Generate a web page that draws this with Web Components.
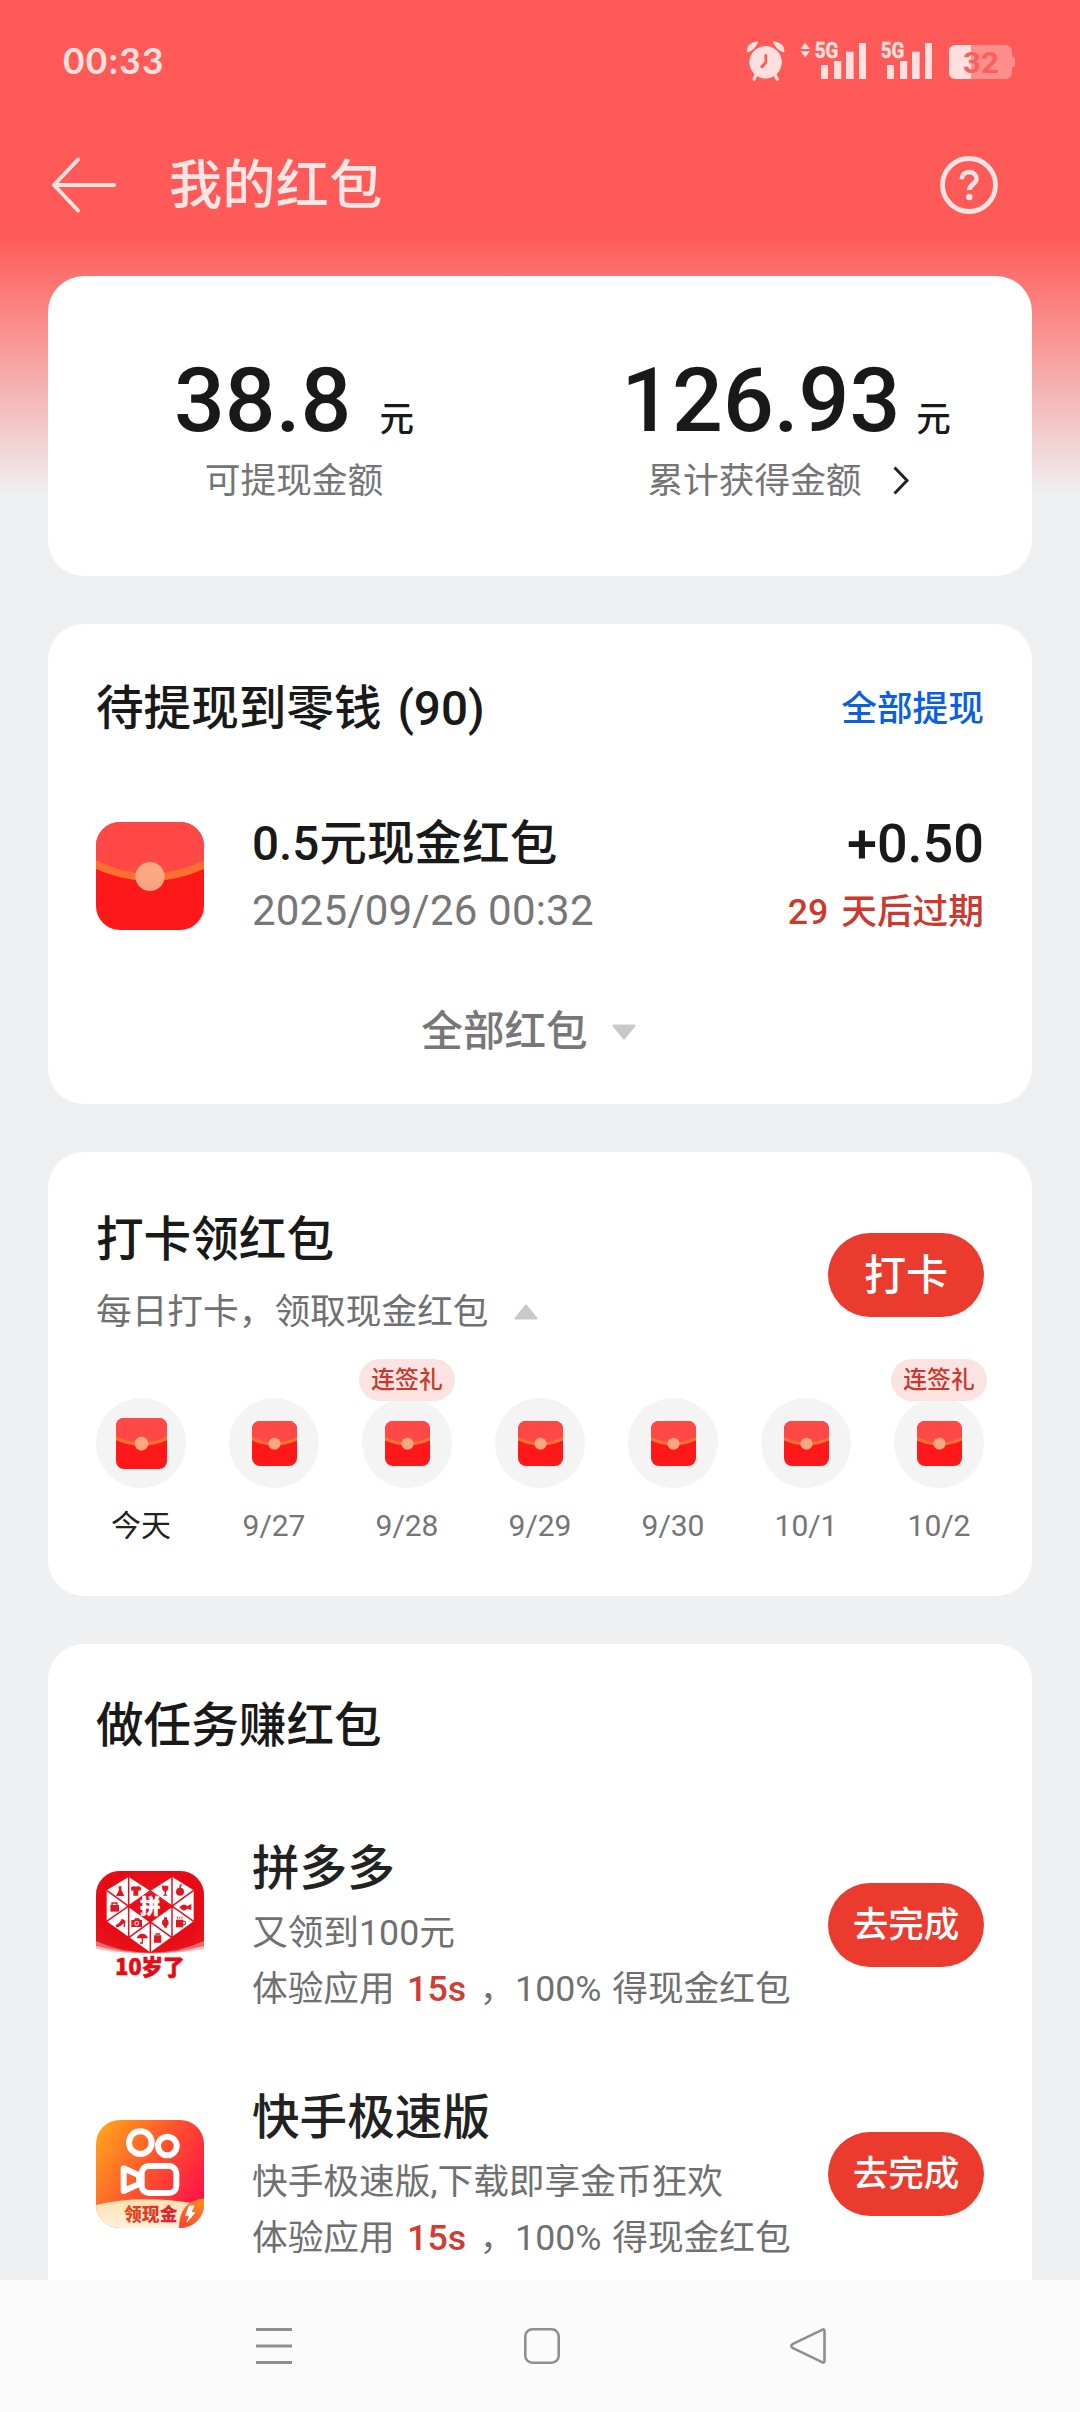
<!DOCTYPE html>
<html lang="zh-CN">
<head>
<meta charset="utf-8">
<title>我的红包</title>
<style>
html,body{margin:0;padding:0}
body{width:1080px;height:2412px;overflow:hidden;background:#eff0f2;color:#191919;
font-family:Roboto,"Noto Sans CJK SC",sans-serif;font-size:35.700px}
</style>
</head>
<body>
<packet-page></packet-page>
<script>
const define=(name,html)=>customElements.define(name,class extends HTMLElement{
  constructor(){super();const t=document.createElement('template');
    t.innerHTML=html;
    this.attachShadow({mode:'open'}).append(t.content.cloneNode(true));}
});

define('status-bar',`
<style>
:host{display:flex;flex:none;align-items:center;justify-content:space-between;height:122px;padding:0 63px 0 63px;box-sizing:border-box;color:#ffe0df}
b{font:700 37px/44px Lato,sans-serif;letter-spacing:1.300px;margin-top:-2px}
svg{display:block;overflow:visible}
text{font-family:Roboto,sans-serif;font-weight:700}
</style>
<b>00:33</b>
<svg width="272" height="44" viewBox="745 40 272 44" fill="#ffe0df">
  <circle cx="765.6" cy="63.3" r="16.2"/>
  <path d="M747.6 52.5Q747 45 757.5 43Q754 51 747.6 52.5ZM783.6 52.5Q784.2 45 773.7 43Q777.2 51 783.6 52.5Z" stroke="#ffe0df" stroke-width="1.4" stroke-linejoin="round"/>
  <path d="M756.5 75l-2.4 5M774.7 75l2.4 5" stroke="#ffe0df" stroke-width="3.2" stroke-linecap="round"/>
  <path d="M765.8 56.5v7l-4 4.2" fill="none" stroke="#ff5a57" stroke-width="2.8" stroke-linecap="round" stroke-linejoin="round"/>
  <path d="M800.5 50l4.700-6.200l4.700 6.200zM800.5 52.3h9.4l-4.7 6z"/>
  <g font-size="22.500" stroke="#ffe0df" stroke-width=".5"><text x="814.800" y="59" textLength="23.500" lengthAdjust="spacingAndGlyphs">5G</text>
  <text x="880.800" y="59" textLength="23.500" lengthAdjust="spacingAndGlyphs">5G</text></g>
  <path d="M821 66h7v14h-7zM834 62h7.2v18H834zM846 52.8h7.6V80H846zM859 44h7v36h-7z"/>
  <path d="M887 66h7v14h-7zM900 62h7.2v18H900zM912 52.8h7.6V80H912zM925 44h7v36h-7z"/>
  <path d="M956 46h49q7 0 7 7v4.5q3 0 3 3v5q0 3-3 3V73q0 7-7 7h-49q-7 0-7-7V53q0-7 7-7z" fill="#ff8f8d"/>
  <path d="M971 46h-15q-7 0-7 7v20q0 7 7 7h15z"/>
  <text x="963" y="73.8" font-size="29.500" fill="#ff5f5c" textLength="36" lengthAdjust="spacingAndGlyphs">32</text>
</svg>`);

define('app-bar',`
<style>
:host{display:flex;flex:none;align-items:center;height:126px;padding:0 81px 0 50px;box-sizing:border-box;color:#ffe5e4}
svg{display:block;flex:none}
h1{flex:1;margin:2px 0 0 51px;font-size:53px;font-weight:500;line-height:72px;letter-spacing:.4px}
</style>
<svg width="68" height="58" viewBox="0 0 68 58" fill="none" stroke="#ffe3e2" stroke-width="4" stroke-linecap="round" stroke-linejoin="round"><path d="M28 3.500L4 29l24 25.500M4 29h60"/></svg>
<h1>我的红包</h1>
<svg width="60" height="60" viewBox="0 0 60 60" fill="none" stroke="#ffe3e2"><circle cx="30" cy="30" r="26.500" stroke-width="4.800"/><path d="M22.700 24.300c0-4.400 3.200-7.200 7.500-7.200 4.200 0 7.300 2.800 7.300 6.600 0 5.300-7.200 5.600-7.200 11.300" stroke-width="4.600" stroke-linecap="butt"/><circle cx="30.300" cy="42" r="3.200" fill="#ffe3e2" stroke="none"/></svg>`);

define('panel-card',`
<style>:host{display:block;box-sizing:border-box;margin:0 48px 48px;padding:0 48px;background:#fff;border-radius:36px;overflow:hidden;flex:none}</style><slot></slot>`);

define('amount-stat',`
<style>
:host{display:flex;flex-direction:column;align-items:center;flex:1 1 0}
.v{display:flex;align-items:baseline;height:100px;line-height:100px;font-weight:500;font-size:34.500px}
.v b{font-size:89.500px;font-weight:500}
.l{display:flex;align-items:center;height:48px;line-height:48px;margin-top:6px;color:#757575}
.v i{font-style:normal;margin-left:var(--unit-gap,16px)}
</style>
<div class="v"><b><slot name="value"></slot></b><i>元</i></div>
<div class="l"><slot></slot></div>`);

define('chevron-mark',`
<style>:host{display:block;width:63px;height:36px}svg{display:block}</style>
<svg width="63" height="36" viewBox="0 0 63 36" fill="none" stroke="#222" stroke-width="3"><path d="M32.500 4.500l12.500 13l-12.500 13"/></svg>`);

define('caret-mark',`
<style>:host{display:block;width:26px;height:18px}:host([up]){transform:rotate(180deg)}svg{display:block}</style>
<svg width="26" height="18" viewBox="0 0 26 18"><path d="M2.500 2.500h21L13 15.500z" fill="#c9c9c9" stroke="#c9c9c9" stroke-width="2" stroke-linejoin="round"/></svg>`);

define('envelope-icon',`
<style>:host{display:block;width:var(--size,108px);height:var(--size,108px);border-radius:var(--rad,24px);overflow:hidden;flex:none}svg{display:block;width:100%;height:100%}</style>
<svg viewBox="0 0 108 108">
<defs><linearGradient id="g" x1="0" y1="0" x2="0" y2="1"><stop offset="0" stop-color="#fdad7d"/><stop offset="1" stop-color="#f9a184"/></linearGradient></defs>
<rect width="108" height="108" fill="#ff181a"/>
<path d="M0 0h108v43Q54 68 0 43z" fill="#ff4946"/>
<path d="M0 38.500Q54 65 108 38.500v8.500Q54 71 0 47z" fill="#ff7030"/>
<circle cx="54" cy="54.500" r="14.600" fill="url(#g)"/></svg>`);

define('pill-button',`
<style>:host{display:block;flex:none}
button{all:unset;box-sizing:border-box;display:block;width:156px;height:84px;border-radius:42px;background:#eb3b2f;color:#fff;text-align:center;line-height:83px;font-size:var(--fs,35.600px);font-weight:500}</style>
<button><slot></slot></button>`);

define('packet-item',`
<style>
:host{display:flex;align-items:center;height:120px;margin-top:70px}
.m{flex:1;margin-left:48px}.r{text-align:right}
.a{height:56px;line-height:56px;font-size:47.600px;font-weight:500}
.b{height:50px;line-height:50px;margin-top:14px;font-size:42px;letter-spacing:.200px;color:#777}
.r .a{font-size:54px}
.r .b{font-size:35.700px;line-height:52px;font-weight:500;letter-spacing:0;word-spacing:4px;color:#cd392d}
</style>
<envelope-icon></envelope-icon>
<div class="m"><div class="a"><slot name="title"></slot></div><div class="b"><slot name="time"></slot></div></div>
<div class="r"><div class="a"><slot name="amount"></slot></div><div class="b"><slot name="expiry"></slot></div></div>`);

define('day-cell',`
<style>
:host{display:flex;flex-direction:column;align-items:center;width:90px;position:relative;--size:45px;--rad:8px;color:#757575}
:host([today]){--size:51px;color:#222}
.c{display:flex;align-items:center;justify-content:center;width:90px;height:90px;border-radius:50%;background:#f4f4f4}
.t{margin-top:17px;line-height:41px;font-size:30px;white-space:nowrap}
.g{display:none;position:absolute;top:-39px;left:-3px;width:96px;height:42px;border-radius:21px;background:#fae3e1;color:#c9382d;font-size:23.800px;line-height:42px;font-weight:500;text-align:center}
:host([gift]) .g{display:block}
</style>
<div class="c"><envelope-icon></envelope-icon></div><div class="t"><slot></slot></div><div class="g"><slot name="gift"></slot></div>`);

define('pdd-icon',`
<style>:host{display:block;width:108px;height:108px;border-radius:24px;flex:none}svg{display:block;overflow:visible}text{font-family:"Noto Sans CJK SC",sans-serif;font-weight:900}</style>
<svg width="108" height="108" viewBox="48 62 324 324">
<defs><clipPath id="o"><rect x="48" y="62" width="324" height="324" rx="72"/></clipPath><radialGradient id="r" cx=".5" cy=".4" r=".65"><stop offset="0" stop-color="#f01820"/><stop offset=".7" stop-color="#e60a15"/><stop offset="1" stop-color="#e8141c"/></radialGradient></defs>
<g clip-path="url(#o)">
<path d="M48 62h324v324H48z" fill="#fff"/>
<path d="M48 62h324v234Q211 324 48 296z" fill="#f8bcbc"/>
<path d="M48 62h324v225Q211 330 48 287z" fill="#f06a6c"/>
<path d="M48 62h324v210Q300 306 211 307Q120 306 48 272z" fill="url(#r)"/></g>
<path d="M146 80L211 122L277 80L341 120V213L211 306L80 213V120z" fill="#fff"/>
<path d="M146 80V260M276 80V260M211 214V306M80 120L276 262M341 120L146 262M80 213L211 122L341 213" fill="none" stroke="#e80e19" stroke-width="4.500"/>
<g fill="#dc1820">
<path d="M115 108h10l-1 10 9 19h-25l9-19zM153 111l9-4q6 5 12 0l10 5-3 10-6-2v16h-15v-16l-6 2zM246 106h19q1 13-7 18v7l5 5h-15l6-5v-7q-9-5-8-18z"/>
<circle cx="300" cy="124" r="12"/><path d="M298 113l1-10 7-2-4 12z"/>
<path d="M91 164h26v20H91z"/><path d="M96 165v-7h15v7" fill="none" stroke="#dc1820" stroke-width="4"/>
<path d="M298 171q12-15 24-4l12-6v18l-12-4q-11 12-24-4z"/>
<path d="M107 224q14-6 17-18 14 2 12 10l-1 15h-4v-13q-9 12-22 13zM154 209h8l3-5h12l3 5h6v21h-32z"/>
<circle cx="170" cy="219" r="7" fill="#fff"/><circle cx="170" cy="219" r="4"/>
<circle cx="256" cy="217" r="10"/><path d="M252 201h9v31h-9z"/>
<path d="M288 208h22v23h-22z"/><path d="M309 213h7v10h-7M292 205v-6M299 205v-6M306 205v-6" fill="none" stroke="#dc1820" stroke-width="3"/>
<path d="M170 264q4-14 17-14t17 14z"/><path d="M187 262v16h-7" fill="none" stroke="#dc1820" stroke-width="4"/>
<path d="M222 255h22v22h-22zM226 249h14v4h-14z"/></g>
<path d="M146 168L211 124L276 168L211 214z" fill="#e80e19"/>
<text x="211" y="191" text-anchor="middle" font-size="60" fill="#fff" stroke="#fff" stroke-width="2">拼</text>
<text x="106" y="374" font-size="66" fill="#e60a15" stroke="#e60a15" stroke-width="2" textLength="208" lengthAdjust="spacingAndGlyphs">10岁了</text>
</svg>`);

define('kuaishou-icon',`
<style>:host{display:block;width:108px;height:108px;border-radius:24px;overflow:hidden;flex:none}svg{display:block}text{font-family:"Noto Sans CJK SC",sans-serif;font-weight:900}</style>
<svg width="108" height="108" viewBox="48 60 324 324">
<defs><linearGradient id="k" x1="0" y1=".15" x2="1" y2=".75"><stop offset="0" stop-color="#ffa01e"/><stop offset=".5" stop-color="#ff522c"/><stop offset="1" stop-color="#ff1048"/></linearGradient>
<linearGradient id="t" x1="0" y1="0" x2="1" y2="0"><stop offset="0" stop-color="#e0501c"/><stop offset="1" stop-color="#e01a30"/></linearGradient>
<linearGradient id="c" x1="0" y1="0" x2="0" y2="1"><stop offset="0" stop-color="#ffe0b0"/><stop offset="1" stop-color="#fff1dc"/></linearGradient>
<linearGradient id="b" x1="1" y1="0" x2="0" y2="1"><stop offset="0" stop-color="#ff9b1c"/><stop offset="1" stop-color="#ff3c2e"/></linearGradient></defs>
<path d="M48 60h324v324H48z" fill="url(#k)"/>
<path d="M48 315Q170 284 330 308V384H48z" fill="url(#c)"/>
<path d="M384 295Q298 296 297 384H384z" fill="url(#b)"/>
<g fill="none" stroke="#fff" stroke-width="18" stroke-linejoin="round"><circle cx="181" cy="128" r="34"/><circle cx="262" cy="138" r="28"/><rect x="185" y="198" width="104" height="81" rx="22"/><path d="M131 205v68l46-21v-26z"/></g>
<path d="M328 318l-11 28 12 0-8 20 23-28-11-1 9-19z" fill="#fff" stroke="#fff" stroke-width="3" stroke-linejoin="round"/>
<text x="132" y="363" font-size="53" fill="url(#t)" textLength="160">领现金</text>
</svg>`);

define('task-row',`
<style>
:host{display:flex;align-items:center;height:180px;margin-bottom:69px}
.m{flex:1;margin-left:48px;padding-top:4px;white-space:nowrap}
.a{height:60px;line-height:60px;font-size:47.600px;font-weight:500;color:#222}
.b{height:50px;line-height:50px;margin-top:9px;color:#707070}
.c{height:50px;line-height:50px;margin-top:6px;padding-bottom:1px;color:#707070;word-spacing:2px}
em{font-style:normal;font-weight:500;color:#d23b30;margin:0 2.500px 0 1.500px}
</style>
<slot name="icon"></slot>
<div class="m"><div class="a"><slot name="title"></slot></div><div class="b"><slot name="note"></slot></div>
<div class="c">体验应用 <em>15s</em> ，100% 得现金红包</div></div>
<pill-button>去完成</pill-button>`);

define('nav-bar',`
<style>:host{display:flex;align-items:center;height:132px;background:#fbfbfb;padding:0 251px 0 254px;justify-content:space-between;flex:none}svg{display:block}</style>
<svg width="40" height="40" viewBox="0 0 40 40" stroke="#8f8f8f" stroke-width="2.800"><path d="M2 3.500h36M2 20h36M2 36.500h36"/></svg>
<svg width="40" height="40" viewBox="0 0 40 40" fill="none" stroke="#8f8f8f" stroke-width="2.600"><rect x="3.300" y="3.300" width="33.400" height="33.400" rx="7"/></svg>
<svg width="40" height="40" viewBox="0 0 40 40" fill="none" stroke="#8f8f8f" stroke-width="2.600" stroke-linejoin="round"><path d="M33 3.800Q35.500 2.500 35.500 5.500V34.500Q35.500 37.500 33 36.200L3.500 21.800Q1 20 3.500 18.200z"/></svg>`);

define('packet-page',`
<style>
:host{display:flex;flex-direction:column;width:1080px;height:2412px}
main{height:2280px;overflow:hidden;display:flex;flex-direction:column;background:linear-gradient(#ff5a57 0,#ff5a57 236px,#eff0f2 496px) #eff0f2}
.sum{margin-top:28px;height:300px;padding:75px 0 0}
.two{display:flex}
.list{height:480px;padding-top:50px}
.sign{height:444px;padding-top:58px;overflow:visible}
.todo{height:800px;padding-top:52px}
.head{display:flex;align-items:center;justify-content:space-between;height:70px;padding-bottom:2px}
h2{margin:0;font-size:47.600px;line-height:60px;font-weight:500;word-spacing:4px}
a{color:#0b60df;font-weight:500;line-height:50px}
.all{display:flex;align-items:center;justify-content:center;height:60px;line-height:60px;margin-top:66px;font-size:41.600px;font-weight:500;color:#777;gap:23px;padding-right:22px}
.sh{display:flex;align-items:center;justify-content:space-between;height:130px}
.st{padding-bottom:4px}
.sub{display:flex;align-items:center;gap:24px;height:48px;line-height:48px;margin-top:18px;color:#707070}
.days{display:flex;justify-content:space-between;margin-top:58px}
.todo h2{margin-bottom:79px}
</style>
<main>
<status-bar></status-bar>
<app-bar></app-bar>
<panel-card class="sum"><div class="two">
<amount-stat style="--unit-gap:28px"><span slot="value">38.8</span>可提现金额</amount-stat>
<amount-stat><span slot="value">126.93</span>累计获得金额<chevron-mark></chevron-mark></amount-stat></div></panel-card>
<panel-card class="list">
<div class="head"><h2>待提现到零钱 (90)</h2><a>全部提现</a></div>
<packet-item><span slot="title">0.5元现金红包</span><span slot="time">2025/09/26 00:32</span><span slot="amount">+0.50</span><span slot="expiry">29 天后过期</span></packet-item>
<div class="all"><span>全部红包</span><caret-mark></caret-mark></div>
</panel-card>
<panel-card class="sign">
<div class="sh"><div class="st"><h2>打卡领红包</h2><div class="sub"><span>每日打卡，领取现金红包</span><caret-mark up></caret-mark></div></div><pill-button style="--fs:42px">打卡</pill-button></div>
<div class="days"><day-cell today>今天</day-cell><day-cell>9/27</day-cell><day-cell gift>9/28<span slot="gift">连签礼</span></day-cell><day-cell>9/29</day-cell><day-cell>9/30</day-cell><day-cell>10/1</day-cell><day-cell gift>10/2<span slot="gift">连签礼</span></day-cell></div>
</panel-card>
<panel-card class="todo">
<h2>做任务赚红包</h2>
<task-row><pdd-icon slot="icon"></pdd-icon><span slot="title">拼多多</span><span slot="note">又领到100元</span></task-row>
<task-row><kuaishou-icon slot="icon"></kuaishou-icon><span slot="title">快手极速版</span><span slot="note">快手极速版,下载即享金币狂欢</span></task-row>
</panel-card>
</main>
<nav-bar></nav-bar>`);
</script>
</body>
</html>
